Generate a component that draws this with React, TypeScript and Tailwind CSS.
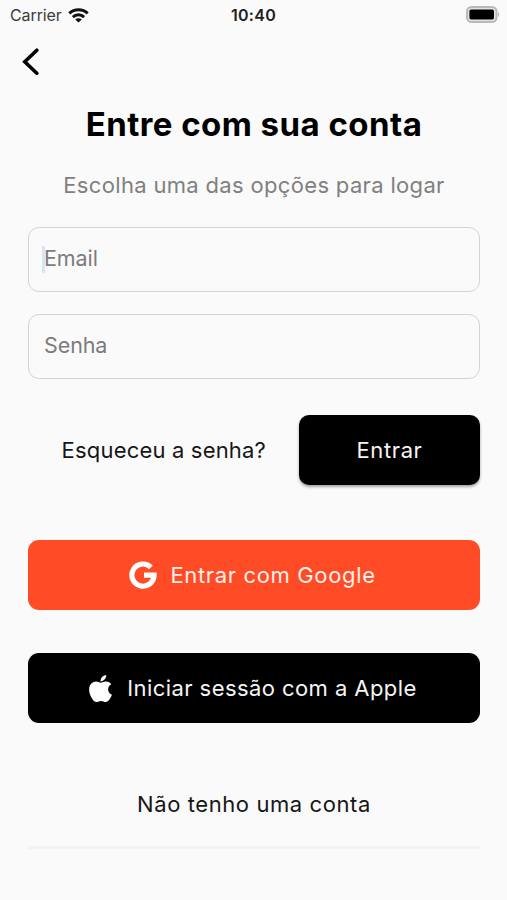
import React from "react";
import { FaApple } from "react-icons/fa";

function StatusBar() {
  return (
    <div className="grid h-[30px] grid-cols-3 items-center pl-[10px] pr-[7px] text-[#202020]">
      <div className="flex items-center gap-[6px]">
        <span className="text-[16px] leading-[30px] tracking-[-0.1px] text-[#3a3a3a]">Carrier</span>
        <svg width="21" height="15" viewBox="0 0 21 15" fill="none" stroke="#111" strokeWidth="3">
          <path d="M1.3 5.4a13.2 13.2 0 0 1 18.4 0" />
          <path d="M4.9 9.1a8 8 0 0 1 11.2 0" />
          <path d="M10.5 14.6 7.2 11.5a4.7 4.7 0 0 1 6.6 0z" fill="#111" stroke="none" />
        </svg>
      </div>
      <span className="-ml-[3px] text-center text-[16px] font-semibold leading-[30px] tracking-[0.3px]">10:40</span>
      <div className="-mt-[2px] flex items-center justify-end">
        <svg width="34" height="17" viewBox="0 0 34 17">
          <rect x="1" y="1" width="29.5" height="15" rx="4.5" fill="#e4e4e4" stroke="#b9b9b9" strokeWidth="2" />
          <rect x="3.4" y="3.4" width="24.6" height="10.2" rx="1.8" fill="#000" />
          <path d="M32 6.2c1.5.4 1.5 4.2 0 4.6z" fill="#b5b5b5" />
        </svg>
      </div>
    </div>
  );
}

function GoogleMark() {
  return (
    <svg className="shrink-0" width="28" height="28" viewBox="0 0 28 28" fill="none" stroke="#fff" strokeWidth="5.2">
      <path d="M21.9 6.3A11.1 11.1 0 1 0 25.1 14.1H15" strokeLinejoin="miter" />
    </svg>
  );
}

export default function App() {
  return (
    <main className="flex h-[900px] w-[507px] flex-col overflow-hidden bg-[#fafafa] font-['Inter',sans-serif] text-[22px] text-[#161616]">
      <StatusBar />
      <header className="flex h-[62px] items-center pl-[22px]">
        <svg width="18" height="28" viewBox="0 0 18 28" fill="none" stroke="#000" strokeWidth="3.6" strokeLinecap="round">
          <path d="M14.8 3.2 2.8 14.7l12 11.5" />
        </svg>
      </header>
      <section className="flex flex-col pl-[28px] pr-[27px]">
        <h1 className="h-[64px] whitespace-nowrap text-center text-[33px] font-bold leading-[64px] tracking-[0.45px] text-black">Entre com sua conta</h1>
        <p className="h-[58px] whitespace-nowrap text-center leading-[58px] tracking-[0.33px] text-[#808080]">Escolha uma das opções para logar</p>
        <form className="mt-[13px] flex flex-col gap-[22px]">
          <div className="flex h-[65px] items-center rounded-[11px] border border-[#d4d4d4] pl-[13px] text-[#7c7c7c]">
            <span className="h-[27px] w-[3px] bg-[#d6e6f7]" />
            <span className="-ml-px -mt-[3px] text-[21.5px] tracking-[-0.1px]">Email</span>
          </div>
          <div className="flex h-[65px] items-center rounded-[11px] border border-[#d4d4d4] pl-[15px] text-[#7c7c7c]">
            <span className="-mt-[2px] text-[21.5px] tracking-[-0.1px]">Senha</span>
          </div>
        </form>
        <div className="mt-[36px] flex h-[70px] items-center justify-end gap-[33px]">
          <span className="whitespace-nowrap tracking-[0.18px]">Esqueceu a senha?</span>
          <button type="button" className="h-[70px] w-[181px] rounded-[10px] bg-black tracking-[0.6px] text-[#f5f5f5] shadow-[0_2px_3px_rgba(0,0,0,0.35)]">
            Entrar
          </button>
        </div>
        <button type="button" className="mt-[55px] flex h-[70px] items-center justify-center gap-[13px] whitespace-nowrap rounded-[11px] bg-[#ff4c27] pr-[3px] text-[#fff0e9]">
          <GoogleMark />
          <span className="tracking-[0.65px]">Entrar com Google</span>
        </button>
        <button type="button" className="mt-[43px] flex h-[70px] items-center justify-center gap-[11px] whitespace-nowrap rounded-[11px] bg-black pr-[6px] text-[#f5f5f5]">
          <FaApple className="text-[31px] text-white" />
          <span className="tracking-[0.43px]">Iniciar sessão com a Apple</span>
        </button>
        <div className="mt-[51px] flex h-[75px] justify-center border-b-[3px] border-[#f3f3f3] pt-[14px]">
          <span className="whitespace-nowrap tracking-[0.58px]">Não tenho uma conta</span>
        </div>
      </section>
    </main>
  );
}
